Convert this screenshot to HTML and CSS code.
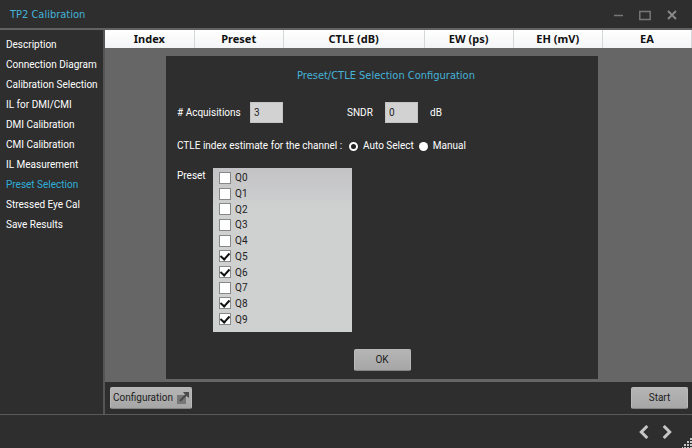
FILE: index.html
```html
<!DOCTYPE html>
<html lang="en">
<head>
    <meta charset="UTF-8">
    <meta name="viewport" content="width=device-width, initial-scale=1.0">
    <title>TP2 Calibration</title>
    <link rel="stylesheet" href="styles.css">
</head>
<body>
    <header class="title-bar">
        <h1>TP2 Calibration</h1>
        <div class="window-controls">
            <button type="button" aria-label="Minimize">
                <svg width="12" height="12" viewBox="0 0 12 12"><path d="M2 6.5H11"/></svg>
            </button>
            <button type="button" aria-label="Maximize">
                <svg width="12" height="12" viewBox="0 0 12 12"><path d="M.8 2.5H11.2V10.5H.8Z"/></svg>
            </button>
            <button type="button" aria-label="Close">
                <svg width="12" height="12" viewBox="0 0 12 12"><path class="close-mark" d="M2 2L10 10M10 2L2 10"/></svg>
            </button>
        </div>
    </header>

    <div class="workspace">
        <nav class="sidebar">
            <a href="#">Description</a>
            <a href="#">Connection Diagram</a>
            <a href="#">Calibration Selection</a>
            <a href="#">IL for DMI/CMI</a>
            <a href="#">DMI Calibration</a>
            <a href="#">CMI Calibration</a>
            <a href="#">IL Measurement</a>
            <a href="#" class="active">Preset Selection</a>
            <a href="#">Stressed Eye Cal</a>
            <a href="#">Save Results</a>
        </nav>

        <main class="main">
            <table class="results">
                <thead>
                    <tr>
                        <th>Index</th>
                        <th>Preset</th>
                        <th class="wide">CTLE (dB)</th>
                        <th>EW (ps)</th>
                        <th>EH (mV)</th>
                        <th>EA</th>
                    </tr>
                </thead>
            </table>

            <div class="content">
                <form class="dialog">
                    <h2>Preset/CTLE Selection Configuration</h2>

                    <div class="fields">
                        <label class="acq-label" for="acquisitions"># Acquisitions</label>
                        <input type="text" id="acquisitions" value="3">
                        <label class="sndr-label" for="sndr">SNDR</label>
                        <input type="text" id="sndr" value="0">
                        <span class="unit">dB</span>
                    </div>

                    <div class="estimate" role="radiogroup" aria-labelledby="estimate-label">
                        <span id="estimate-label">CTLE index estimate for the channel :</span>
                        <label><input type="radio" name="ctle" checked>Auto Select</label>
                        <label><input type="radio" name="ctle">Manual</label>
                    </div>

                    <div class="presets">
                        <span id="preset-label">Preset</span>
                        <div class="preset-list" role="group" aria-labelledby="preset-label">
                            <label><input type="checkbox">Q0</label>
                            <label><input type="checkbox">Q1</label>
                            <label><input type="checkbox">Q2</label>
                            <label><input type="checkbox">Q3</label>
                            <label><input type="checkbox">Q4</label>
                            <label><input type="checkbox" checked>Q5</label>
                            <label><input type="checkbox" checked>Q6</label>
                            <label><input type="checkbox">Q7</label>
                            <label><input type="checkbox" checked>Q8</label>
                            <label><input type="checkbox" checked>Q9</label>
                        </div>
                    </div>

                    <button type="button" class="btn ok-btn">OK</button>
                </form>
            </div>

            <div class="action-bar">
                <button type="button" class="btn config-btn">
                    Configuration
                    <svg width="12" height="12" viewBox="0 0 12 12">
                        <path d="M0 3H9V12H0Z" fill="#777"/>
                        <path d="M3 9L9 3" stroke="#4a4a4a" stroke-width="2"/>
                        <path d="M6 0H12V6L10 4.500L7.500 2Z" fill="#4a4a4a"/>
                    </svg>
                </button>
                <button type="button" class="btn">Start</button>
            </div>
        </main>
    </div>

    <footer class="footer">
        <button type="button" aria-label="Previous">
            <svg width="10" height="14" viewBox="0 0 10 14"><path d="M8.300 1L2.300 7L8.300 13"/></svg>
        </button>
        <button type="button" aria-label="Next">
            <svg width="10" height="14" viewBox="0 0 10 14"><path d="M1.700 1L7.700 7L1.700 13"/></svg>
        </button>
        <svg class="grip" width="10" height="10" viewBox="0 0 10 10">
            <path d="M8 0h2v2h-2zM8 3h2v2h-2zM5 3h2v2h-2zM8 6h2v2h-2zM5 6h2v2h-2zM2 6h2v2h-2zM8 9h2v1h-2zM5 9h2v1h-2zM2 9h2v1h-2zM0 9h1v1h-1z"/>
        </svg>
    </footer>
</body>
</html>
```
FILE: styles.css
```css
* {
    box-sizing: border-box;
}

body {
    display: flex;
    flex-direction: column;
    min-height: 100vh;
    margin: 0;
    background-color: #2e2e2e;
    color: #fff;
    font-family: Roboto, 'Noto Sans', sans-serif;
    font-size: 10px;
    line-height: 16px;
}

button, input {
    font: inherit;
}

h1, h2 {
    margin: 0;
    color: #45b3d9;
    font-family: 'DejaVu Sans Condensed', Roboto, sans-serif;
    font-size: 11px;
    font-weight: normal;
}

.title-bar {
    display: flex;
    justify-content: space-between;
    align-items: center;
    height: 30px;
    padding: 2px 14px 0 10px;
    border-bottom: 2px solid #626262;
}

.window-controls {
    display: flex;
    gap: 15px;
}

.window-controls button, .footer button {
    display: flex;
    padding: 0;
    border: none;
    background: none;
}

.window-controls path {
    fill: none;
    stroke: #777;
    stroke-width: 1.5;
}

.window-controls .close-mark {
    stroke: #888;
    stroke-width: 2;
}

.workspace {
    display: flex;
    flex: 1;
}

.sidebar {
    display: flex;
    flex-direction: column;
    gap: 4px;
    width: 105px;
    padding: 7px 0 0 6px;
    border-right: 2px solid #555;
}

.sidebar a {
    color: #fff;
    text-decoration: none;
    white-space: nowrap;
}

.sidebar .active {
    color: #2eaed9;
}

.main {
    display: flex;
    flex: 1;
    flex-direction: column;
    background-color: #666;
}

.results {
    width: 100%;
    border-collapse: collapse;
    table-layout: fixed;
    background: linear-gradient(#fff, #f3f4f6);
    color: #111;
    font-family: 'Noto Sans', sans-serif;
    font-size: 11px;
}

.results th {
    height: 18px;
    padding: 0;
    border-right: 1px solid #d5d8db;
}

.results .wide {
    width: 24%;
}

.content {
    display: grid;
    grid-template-columns: 61fr 432fr 94fr;
    flex: 1;
    padding: 8px 0 3px;
}

.dialog {
    display: flex;
    grid-column: 2;
    flex-direction: column;
    padding: 12px 11px 8px;
    background-color: #2e2e2e;
}

.dialog h2 {
    padding-left: 8px;
    text-align: center;
}

.fields {
    display: flex;
    align-items: center;
    margin-top: 18px;
}

.fields input {
    width: 33px;
    height: 21px;
    padding: 0 3px;
    border: 1px solid #c4c4c4;
    background-color: #d2d2d2;
    color: #222;
}

.acq-label {
    width: 73px;
}

.sndr-label {
    width: 38px;
    margin-left: 64px;
}

.unit {
    margin-left: 12px;
}

.estimate {
    display: flex;
    align-items: center;
    gap: 5px;
    margin-top: 15px;
}

#estimate-label {
    width: 167px;
    white-space: nowrap;
}

.estimate label {
    display: flex;
    align-items: center;
    gap: 5px;
    white-space: nowrap;
}

.estimate input {
    width: 9px;
    height: 9px;
    margin: 0;
    border-radius: 50%;
    background-color: #fff;
    appearance: none;
}

.estimate input:checked {
    border: 2px solid #fff;
    background-color: #222;
}

.presets {
    display: flex;
    margin-top: 14px;
}

#preset-label {
    width: 36px;
}

.preset-list {
    display: flex;
    flex-direction: column;
    width: 139px;
    height: 164px;
    padding: 2px 6px 5px;
    background: linear-gradient(#c3c3c5, #cfd0d0 25%);
    color: #222;
    line-height: 15px;
}

.preset-list label {
    display: flex;
    flex: 1;
    align-items: center;
    gap: 4px;
}

.preset-list input {
    display: grid;
    place-items: center;
    width: 12px;
    height: 12px;
    margin: 0;
    border: 1px solid #888;
    background-color: #fff;
    appearance: none;
}

.preset-list input:checked::before {
    content: "";
    width: 4px;
    height: 7px;
    margin-bottom: 2px;
    border: solid #111;
    border-width: 0 2px 2px 0;
    transform: rotate(42deg);
}

.btn {
    min-width: 57px;
    height: 22px;
    padding: 0 4px;
    border: 1px solid #b9b9b9;
    border-bottom-color: #858585;
    border-radius: 2px;
    background: linear-gradient(#b5b5b5, #a6a6a6);
    color: #1c1c1c;
}

.ok-btn {
    align-self: center;
    margin-top: auto;
}

.action-bar {
    display: flex;
    justify-content: space-between;
    padding: 5px 4px 5px 5px;
    background-color: #2e2e2e;
}

.config-btn {
    display: flex;
    align-items: center;
    gap: 4px;
    padding: 0 2px;
}

.footer {
    display: flex;
    justify-content: flex-end;
    align-items: center;
    gap: 13px;
    height: 34px;
    border-top: 1px solid #5a5a5a;
}

.footer path {
    fill: none;
    stroke: #c6c6c6;
    stroke-width: 3;
}

.footer .grip {
    align-self: flex-end;
    margin-left: -3px;
}

.footer .grip path {
    fill: #c6c6c6;
    stroke: none;
}
```
